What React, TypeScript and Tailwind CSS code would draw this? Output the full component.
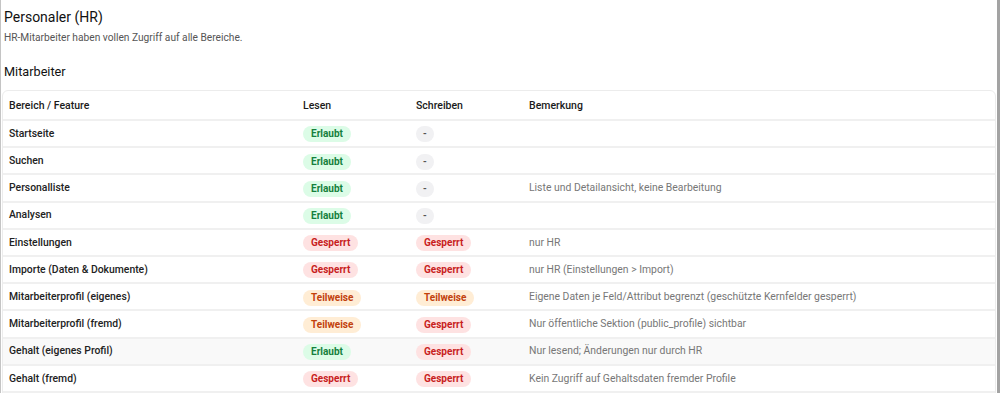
import type { ReactNode } from "react";

type Access = "erlaubt" | "gesperrt" | "teilweise" | "none";

interface PermissionRow {
  feature: string;
  read: Access;
  write: Access;
  note?: string;
  highlighted?: boolean;
}

const rows: PermissionRow[] = [
  { feature: "Startseite", read: "erlaubt", write: "none" },
  { feature: "Suchen", read: "erlaubt", write: "none" },
  {
    feature: "Personalliste",
    read: "erlaubt",
    write: "none",
    note: "Liste und Detailansicht, keine Bearbeitung",
  },
  { feature: "Analysen", read: "erlaubt", write: "none" },
  { feature: "Einstellungen", read: "gesperrt", write: "gesperrt", note: "nur HR" },
  {
    feature: "Importe (Daten & Dokumente)",
    read: "gesperrt",
    write: "gesperrt",
    note: "nur HR (Einstellungen > Import)",
  },
  {
    feature: "Mitarbeiterprofil (eigenes)",
    read: "teilweise",
    write: "teilweise",
    note: "Eigene Daten je Feld/Attribut begrenzt (geschützte Kernfelder gesperrt)",
  },
  {
    feature: "Mitarbeiterprofil (fremd)",
    read: "teilweise",
    write: "gesperrt",
    note: "Nur öffentliche Sektion (public_profile) sichtbar",
  },
  {
    feature: "Gehalt (eigenes Profil)",
    read: "erlaubt",
    write: "gesperrt",
    note: "Nur lesend; Änderungen nur durch HR",
    highlighted: true,
  },
  {
    feature: "Gehalt (fremd)",
    read: "gesperrt",
    write: "gesperrt",
    note: "Kein Zugriff auf Gehaltsdaten fremder Profile",
  },
];

const badgeStyles: Record<Exclude<Access, "none">, { label: string; className: string }> = {
  erlaubt: { label: "Erlaubt", className: "bg-[#dcfce7] text-[#15803d]" },
  gesperrt: { label: "Gesperrt", className: "bg-[#fee2e2] text-[#c81e1e]" },
  teilweise: { label: "Teilweise", className: "bg-[#ffedd5] text-[#c2410c]" },
};

function Badge({ access }: { access: Access }) {
  if (access === "none") {
    return (
      <span className="inline-flex h-[16px] items-center rounded-full bg-[#f1f1f3] px-[7px] align-middle text-[10px] font-semibold text-[#555]">
        -
      </span>
    );
  }

  const style = badgeStyles[access];

  return (
    <span
      className={`inline-flex h-[16px] items-center rounded-full px-[8px] align-middle text-[10px] font-bold ${style.className}`}
    >
      {style.label}
    </span>
  );
}

function HeaderCell({ children, className = "" }: { children: ReactNode; className?: string }) {
  return (
    <th className={`px-[6px] pt-[2px] text-left text-[10.5px] font-medium text-[#1a1a1a] ${className}`}>
      {children}
    </th>
  );
}

export default function App() {
  return (
    <div
      className="h-[393px] overflow-hidden border-r-[3px] border-l border-r-[#a3a3a3] border-l-[#c4c4c4] bg-white text-[#1a1a1a]"
      style={{ fontFamily: "Roboto, 'Liberation Sans', Arial, sans-serif" }}
    >
      <div className="pt-[7px] pr-[1px] pl-[1px]">
        <h1 className="pl-[2px] text-[14px] leading-[20px] font-normal text-[#111]">
          Personaler (HR)
        </h1>
        <p className="mt-[3px] pl-[2px] text-[10.2px] leading-[16px] text-[#555]">
          HR-Mitarbeiter haben vollen Zugriff auf alle Bereiche.
        </p>
        <h2 className="mt-[16px] pl-[2px] text-[12.7px] leading-[20px] font-normal text-[#111]">
          Mitarbeiter
        </h2>

        <div className="mt-[8px] overflow-hidden rounded-t-[6px] border border-[#ececec]">
          <table className="w-full border-collapse leading-none">
            <thead>
              <tr className="h-[29px] border-b-[2px] border-[#f0f0f0]">
                <HeaderCell className="w-[294px]">Bereich / Feature</HeaderCell>
                <HeaderCell className="w-[113px]">Lesen</HeaderCell>
                <HeaderCell className="w-[113px]">Schreiben</HeaderCell>
                <HeaderCell>Bemerkung</HeaderCell>
              </tr>
            </thead>
            <tbody>
              {rows.map((row) => (
                <tr
                  key={row.feature}
                  className={`h-[27.2px] border-b-[2px] border-[#f0f0f0] ${row.highlighted ? "bg-[#f9f9f9]" : ""}`}
                >
                  <td className="px-[6px] pt-[1px] align-middle text-[10.4px] font-medium text-[#222]">
                    {row.feature}
                  </td>
                  <td className="px-[6px] pt-[1px] align-middle">
                    <Badge access={row.read} />
                  </td>
                  <td className="px-[6px] pt-[1px] align-middle">
                    <Badge access={row.write} />
                  </td>
                  <td className="px-[6px] pt-[1px] align-middle text-[10.4px] text-[#777]">
                    {row.note}
                  </td>
                </tr>
              ))}
            </tbody>
          </table>
        </div>
      </div>
    </div>
  );
}
